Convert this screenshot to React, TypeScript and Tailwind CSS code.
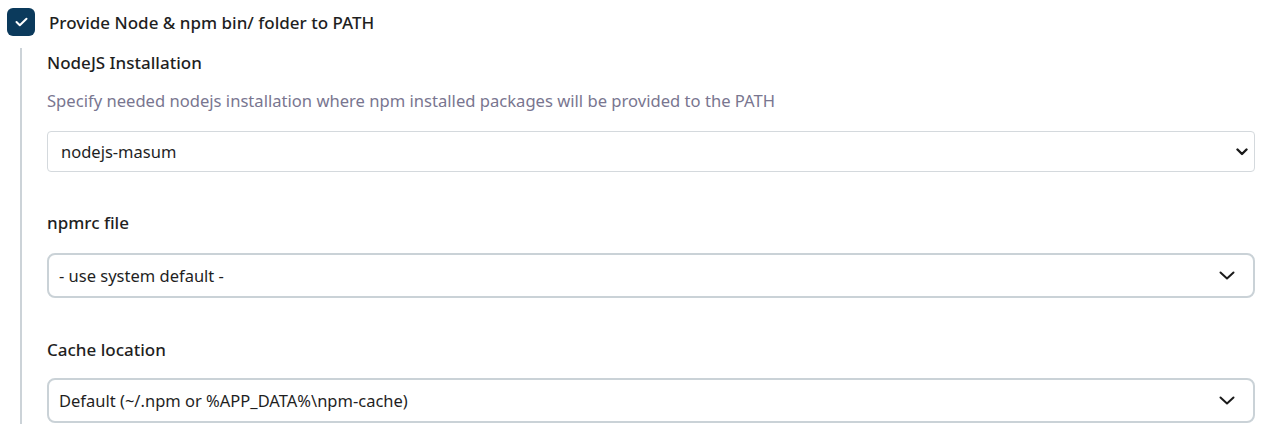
import React from "react";

const font = { fontFamily: "'Noto Sans', 'Open Sans', sans-serif" };

const SmallChevron = () => (
  <svg width="12" height="8" viewBox="0 0 12 8" fill="none">
    <path d="M1.5 1.5 L6 6 L10.5 1.5" stroke="#1a1a1a" strokeWidth="2.4" strokeLinecap="round" strokeLinejoin="round" />
  </svg>
);

const Chevron = () => (
  <svg width="16" height="9" viewBox="0 0 16 9" fill="none">
    <path d="M1.5 1.5 L8 7.5 L14.5 1.5" stroke="#1a1a1a" strokeWidth="2" strokeLinecap="round" strokeLinejoin="round" />
  </svg>
);

export default function App() {
  return (
    <div className="w-[1266px] h-[437px] bg-white text-[#1f1f1f] overflow-hidden" style={font}>
      {/* checkbox row */}
      <div className="flex items-center pt-2 pl-[7px]">
        <div className="w-7 h-7 rounded-[6px] bg-[#0b3a5c] flex items-center justify-center">
          <svg width="13" height="10" viewBox="0 0 13 10" fill="none">
            <path d="M1.5 5 L4.8 8.2 L11.5 1.8" stroke="white" strokeWidth="2" strokeLinecap="round" strokeLinejoin="round" />
          </svg>
        </div>
        <span className="ml-[14px] pt-[2px] text-[17px] leading-6 font-medium">Provide Node &amp; npm bin/ folder to PATH</span>
      </div>

      {/* nested options */}
      <div className="mt-3 ml-5 mr-[11px] h-[376px] border-l-2 border-[#ccd3d8] pl-[25px] pt-[3px]">
        <div className="text-[17px] leading-6 font-medium">NodeJS Installation</div>
        <div className="mt-[14px] text-[16.6px] leading-6 text-[#797690]">
          Specify needed nodejs installation where npm installed packages will be provided to the PATH
        </div>
        <div className="mt-[18px] h-[41px] border border-[#d4d9dd] rounded-[4px] flex items-center justify-between pl-[13px] pr-[6px] text-[16.5px]">
          <span className="pt-[2px]">nodejs-masum</span>
          <SmallChevron />
        </div>

        <div className="mt-[39px] text-[17px] leading-6 font-medium">npmrc file</div>
        <div className="mt-[18px] h-[45px] border-2 border-[#cad2d7] rounded-[8px] flex items-center justify-between pl-[10px] pr-[18px] text-[16.5px]">
          <span className="pt-[2px]">- use system default -</span>
          <Chevron />
        </div>

        <div className="mt-[40px] text-[17px] leading-6 font-medium">Cache location</div>
        <div className="mt-4 h-[45px] border-2 border-[#cad2d7] rounded-[8px] flex items-center justify-between pl-[10px] pr-[18px] text-[16.5px]">
          <span className="pt-[2px]">Default (~/.npm or %APP_DATA%\npm-cache)</span>
          <Chevron />
        </div>
      </div>
    </div>
  );
}
